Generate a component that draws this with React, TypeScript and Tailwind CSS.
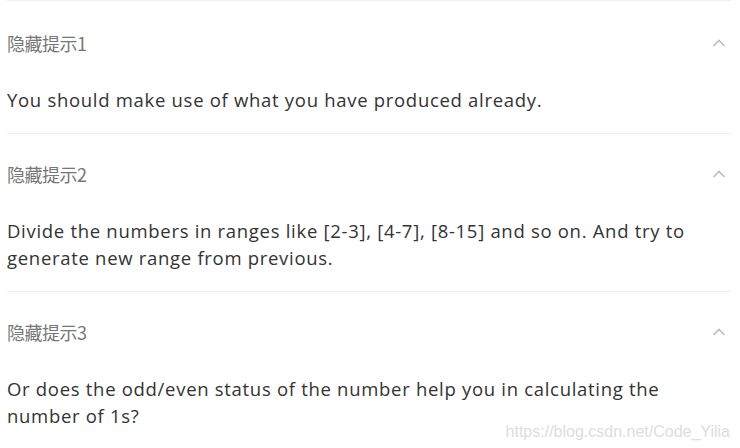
import React from 'react';

const hints = [
  { title: '隐藏提示1', body: 'You should make use of what you have produced already.' },
  { title: '隐藏提示2', body: 'Divide the numbers in ranges like [2-3], [4-7], [8-15] and so on. And try to generate new range from previous.' },
  { title: '隐藏提示3', body: 'Or does the odd/even status of the number help you in calculating the number of 1s?' },
];

function Chevron() {
  return (
    <svg width="14" height="8" viewBox="0 0 14 8" fill="none">
      <path d="M1.5 7 L7 1.5 L12.5 7" stroke="#bdbdbd" strokeWidth="1.6" />
    </svg>
  );
}

export default function App() {
  return (
    <div className="relative w-[740px] h-[448px] overflow-hidden bg-white" style={{ fontFamily: '"Open Sans", "Noto Sans CJK SC", sans-serif' }}>
      <div className="px-[7px] w-[738px]">
        {hints.map((h, i) => (
          <div key={i} className={'border-t border-[#eeeeee] ' + (i === 0 ? 'pt-[2px]' : '')}>
            <div className="h-[80px] flex items-center justify-between">
              <span className="text-[18px] text-[#777777] tracking-[-0.5px]" style={{ fontFamily: '"Noto Sans CJK SC", sans-serif' }}>{h.title}</span>
              <span className="mr-[5px] flex items-center"><Chevron /></span>
            </div>
            <p className="mt-[3px] text-[18.5px] leading-[27px] tracking-[0.7px] text-[#333333] pb-[20px] pr-[20px]">{h.body}</p>
          </div>
        ))}
      </div>
      <div className="absolute right-[10px] bottom-[4px] text-[16px] text-[#dddddd]" style={{ fontFamily: '"Liberation Sans", Arial, sans-serif' }}>
        https://blog.csdn.net/Code_Yilia
      </div>
    </div>
  );
}
